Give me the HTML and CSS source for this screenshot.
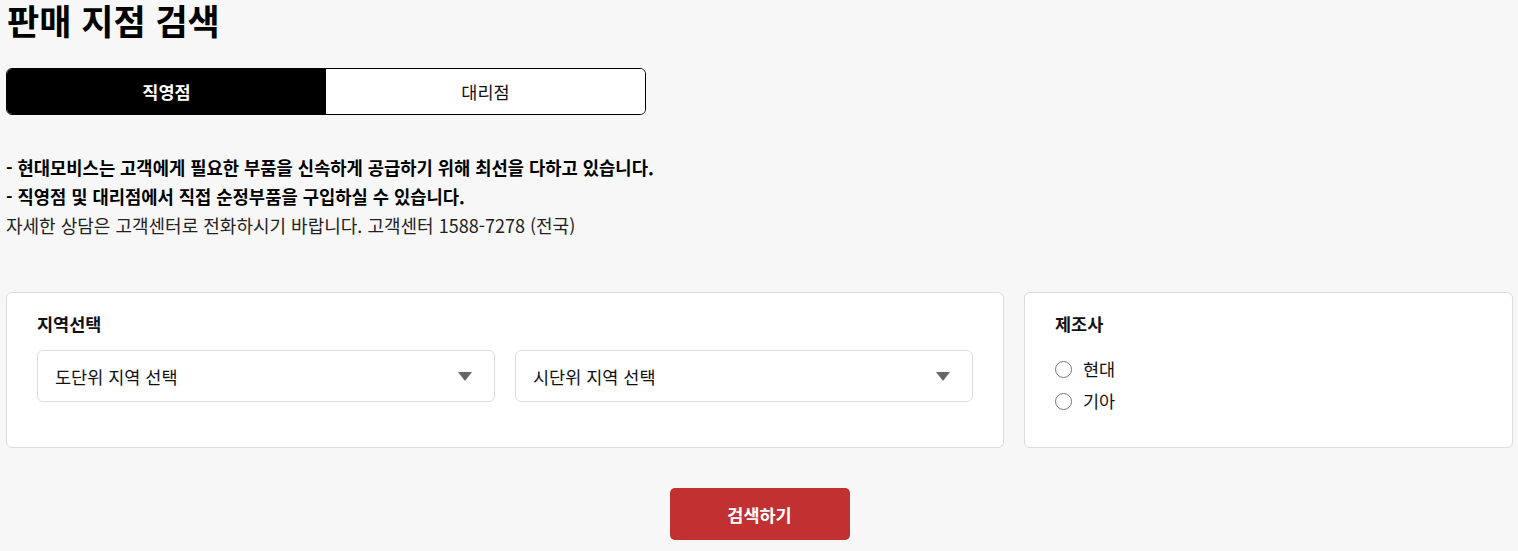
FILE: index.html
```html
<!DOCTYPE html>
<html lang="ko">
<head>
<meta charset="utf-8">
<title>판매 지점 검색</title>
<link rel="stylesheet" href="styles.css">
</head>
<body>
<div class="page">
  <h1 class="title">판매 지점 검색</h1>
  <div class="tabs">
    <button class="tab tab-active">직영점</button>
    <button class="tab">대리점</button>
  </div>
  <div class="notice">
    <p class="strong">- 현대모비스는 고객에게 필요한 부품을 신속하게 공급하기 위해 최선을 다하고 있습니다.</p>
    <p class="strong">- 직영점 및 대리점에서 직접 순정부품을 구입하실 수 있습니다.</p>
    <p>자세한 상담은 고객센터로 전화하시기 바랍니다. 고객센터 1588-7278 (전국)</p>
  </div>
  <div class="filters">
    <div class="card">
      <div class="card-label">지역선택</div>
      <div class="selects">
        <div class="select"><span>도단위 지역 선택</span><span class="caret"></span></div>
        <div class="select"><span>시단위 지역 선택</span><span class="caret"></span></div>
      </div>
    </div>
    <div class="card">
      <div class="card-label">제조사</div>
      <div class="radios">
        <label class="radio"><span class="dot"></span>현대</label>
        <label class="radio"><span class="dot"></span>기아</label>
      </div>
    </div>
  </div>
  <div class="actions">
    <button class="search-btn">검색하기</button>
  </div>
</div>
</body>
</html>
```

FILE: styles.css
```css
* { box-sizing: border-box; }
html, body { margin: 0; padding: 0; background: #f7f7f7; }
body {
  font-family: "Noto Sans CJK KR", "Noto Sans", sans-serif;
  color: #111;
  font-size: 17.5px;
}
.page { padding: 0 5px 0 6px; }
.title {
  margin: 0 0 0 1px;
  font-size: 35px;
  line-height: 40px;
  font-weight: 700;
  color: #000;
}
.tabs {
  display: flex;
  width: 640px;
  height: 47px;
  margin-top: 28px;
  border: 1px solid #000;
  border-radius: 6px;
  overflow: hidden;
  background: #fff;
}
.tab {
  flex: 1;
  border: 0;
  background: #fff;
  font-family: inherit;
  font-size: 17.5px;
  color: #111;
  padding: 0;
  cursor: pointer;
}
.tab-active { background: #000; color: #fff; font-weight: 700; }
.notice { margin-top: 38px; }
.notice p { margin: 0; line-height: 29px; font-size: 18px; color: #222; }
.notice p.strong { font-weight: 700; font-size: 17.7px; color: #000; }
.filters {
  display: grid;
  grid-template-columns: 998px 1fr;
  gap: 20px;
  margin-top: 52px;
}
.card {
  background: #fff;
  border: 1px solid #dcdcdc;
  border-radius: 6px;
  height: 156px;
  padding: 19px 30px 0 30px;
}
.card-label { font-weight: 700; font-size: 17.5px; line-height: 24px; color: #111; }
.selects { display: flex; gap: 20px; margin-top: 14px; }
.select {
  flex: 1;
  height: 52px;
  border: 1px solid #dcdcdc;
  border-radius: 6px;
  display: flex;
  align-items: center;
  justify-content: space-between;
  padding: 0 22px 0 17px;
  font-size: 17.5px;
  color: #111;
}
.caret {
  width: 0; height: 0;
  border-left: 7px solid transparent;
  border-right: 7px solid transparent;
  border-top: 9px solid #666;
}
.radios { margin-top: 21px; display: flex; flex-direction: column; gap: 8px; }
.radio { display: flex; align-items: center; gap: 11px; font-size: 17.5px; line-height: 24px; color: #111; }
.dot {
  width: 17px; height: 17px;
  border: 1px solid #767676;
  border-radius: 50%;
  background: #fff;
}
.actions { display: flex; justify-content: center; margin-top: 40px; }
.search-btn {
  width: 180px;
  height: 52px;
  border: 0;
  border-radius: 5px;
  background: #c13132;
  color: #fff;
  font-family: inherit;
  font-weight: 700;
  font-size: 17.5px;
}
```
